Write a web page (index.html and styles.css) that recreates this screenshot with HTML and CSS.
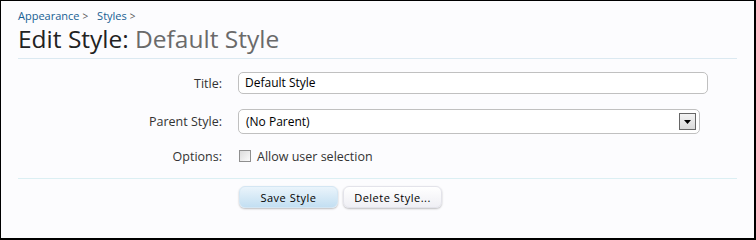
FILE: index.html
```html
<!DOCTYPE html>
<html>
<head>
<meta charset="utf-8">
<link rel="stylesheet" href="styles.css">
</head>
<body>
<div class="page">
  <nav class="crumbs">
    <a class="crumb" href="#">Appearance</a><span class="sep">&gt;</span>
    <a class="crumb" href="#">Styles</a><span class="sep">&gt;</span>
  </nav>
  <h1 class="title">Edit Style: <em class="name">Default Style</em></h1>
  <form class="form">
    <div class="row row-title">
      <label class="label">Title:</label>
      <div class="field"><div class="textbox">Default Style</div></div>
    </div>
    <div class="row row-parent">
      <label class="label">Parent Style:</label>
      <div class="field">
        <div class="selectbox">
          <span>(No Parent)</span>
          <span class="arrow"><svg width="7" height="4" viewBox="0 0 7 4"><path d="M0 0H7L3.5 4Z" fill="#000"/></svg></span>
        </div>
      </div>
    </div>
    <div class="row row-options">
      <label class="label">Options:</label>
      <div class="field check"><span class="checkbox"></span><span>Allow user selection</span></div>
    </div>
    <div class="submit">
      <span class="btn primary">Save Style</span>
      <span class="btn">Delete Style...</span>
    </div>
  </form>
</div>
</body>
</html>
```
FILE: styles.css
```css
html, body { margin: 0; padding: 0; }
body { width: 756px; height: 240px; font-family: "Open Sans", "Noto Sans", sans-serif; color: #333; }
.page {
  box-sizing: border-box;
  width: 756px; height: 240px;
  border: 1px solid #000; border-right-width: 2px; border-bottom-width: 2px;
  background: #fcfcfe;
  padding: 7px 17px 0 17px;
}
.crumbs { font-size: 11px; line-height: 16px; height: 16px; }
.crumb { color: #176093; text-decoration: none; }
.sep { color: #555; margin: 0 6px 0 3px; font-size: 10px; }
.title {
  margin: 0; font-size: 24.5px; font-weight: normal; line-height: 30px;
  color: #222; padding-bottom: 4px; border-bottom: 1px solid #dbe9f1;
}
.name { font-style: normal; color: #6a6a6a; }
.form { margin: 0; }
.row { display: grid; grid-template-columns: 204px 1fr; column-gap: 16px; align-items: center; }
.label { text-align: right; font-size: 12.5px; color: #333; }
.row-title { margin-top: 13px; height: 22px; }
.row-parent { margin-top: 15px; height: 25px; }
.row-options { margin-top: 13px; height: 18px; }
.textbox {
  box-sizing: border-box; width: 470px; height: 22px;
  border: 1px solid #c0c0c0; border-radius: 5px; background: #fff;
  font-size: 12px; line-height: 20px; padding-left: 6px; color: #000;
}
.selectbox {
  box-sizing: border-box; width: 462px; height: 25px;
  border: 1px solid #c0c0c0; border-radius: 5px; background: #fff;
  font-size: 12px; padding-left: 7px; padding-right: 3px; color: #000;
  display: flex; align-items: center; justify-content: space-between;
}
.arrow {
  box-sizing: border-box; width: 17px; height: 17px; border: 1px solid #666;
  background: linear-gradient(#f4f4f4, #d9d9d9);
  display: flex; align-items: center; justify-content: center;
}
.check { display: flex; align-items: center; font-size: 12.5px; color: #333; }
.checkbox {
  box-sizing: border-box; width: 12px; height: 12px; border: 1px solid #8f8f8f;
  background: linear-gradient(135deg, #dcdcdc, #fbfbfb); margin: 0 6px 0 1px;
}
.submit {
  margin-top: 13px; border-top: 1px solid #dbeff3; padding: 7px 0 0 221px;
  display: flex; gap: 5px;
}
.btn {
  box-sizing: border-box; width: 99px; height: 22px; border-radius: 6px;
  font-size: 11px; letter-spacing: 0.5px; color: #000; text-align: center; line-height: 21px;
  background: linear-gradient(#ffffff, #efeff4);
  border: 1px solid #e3e3ea;
  box-shadow: 0 1px 2px rgba(0,0,0,0.25);
}
.btn.primary {
  background: linear-gradient(#eaf4fb, #c3dff2);
  border-color: #d4e6f3;
}
```
